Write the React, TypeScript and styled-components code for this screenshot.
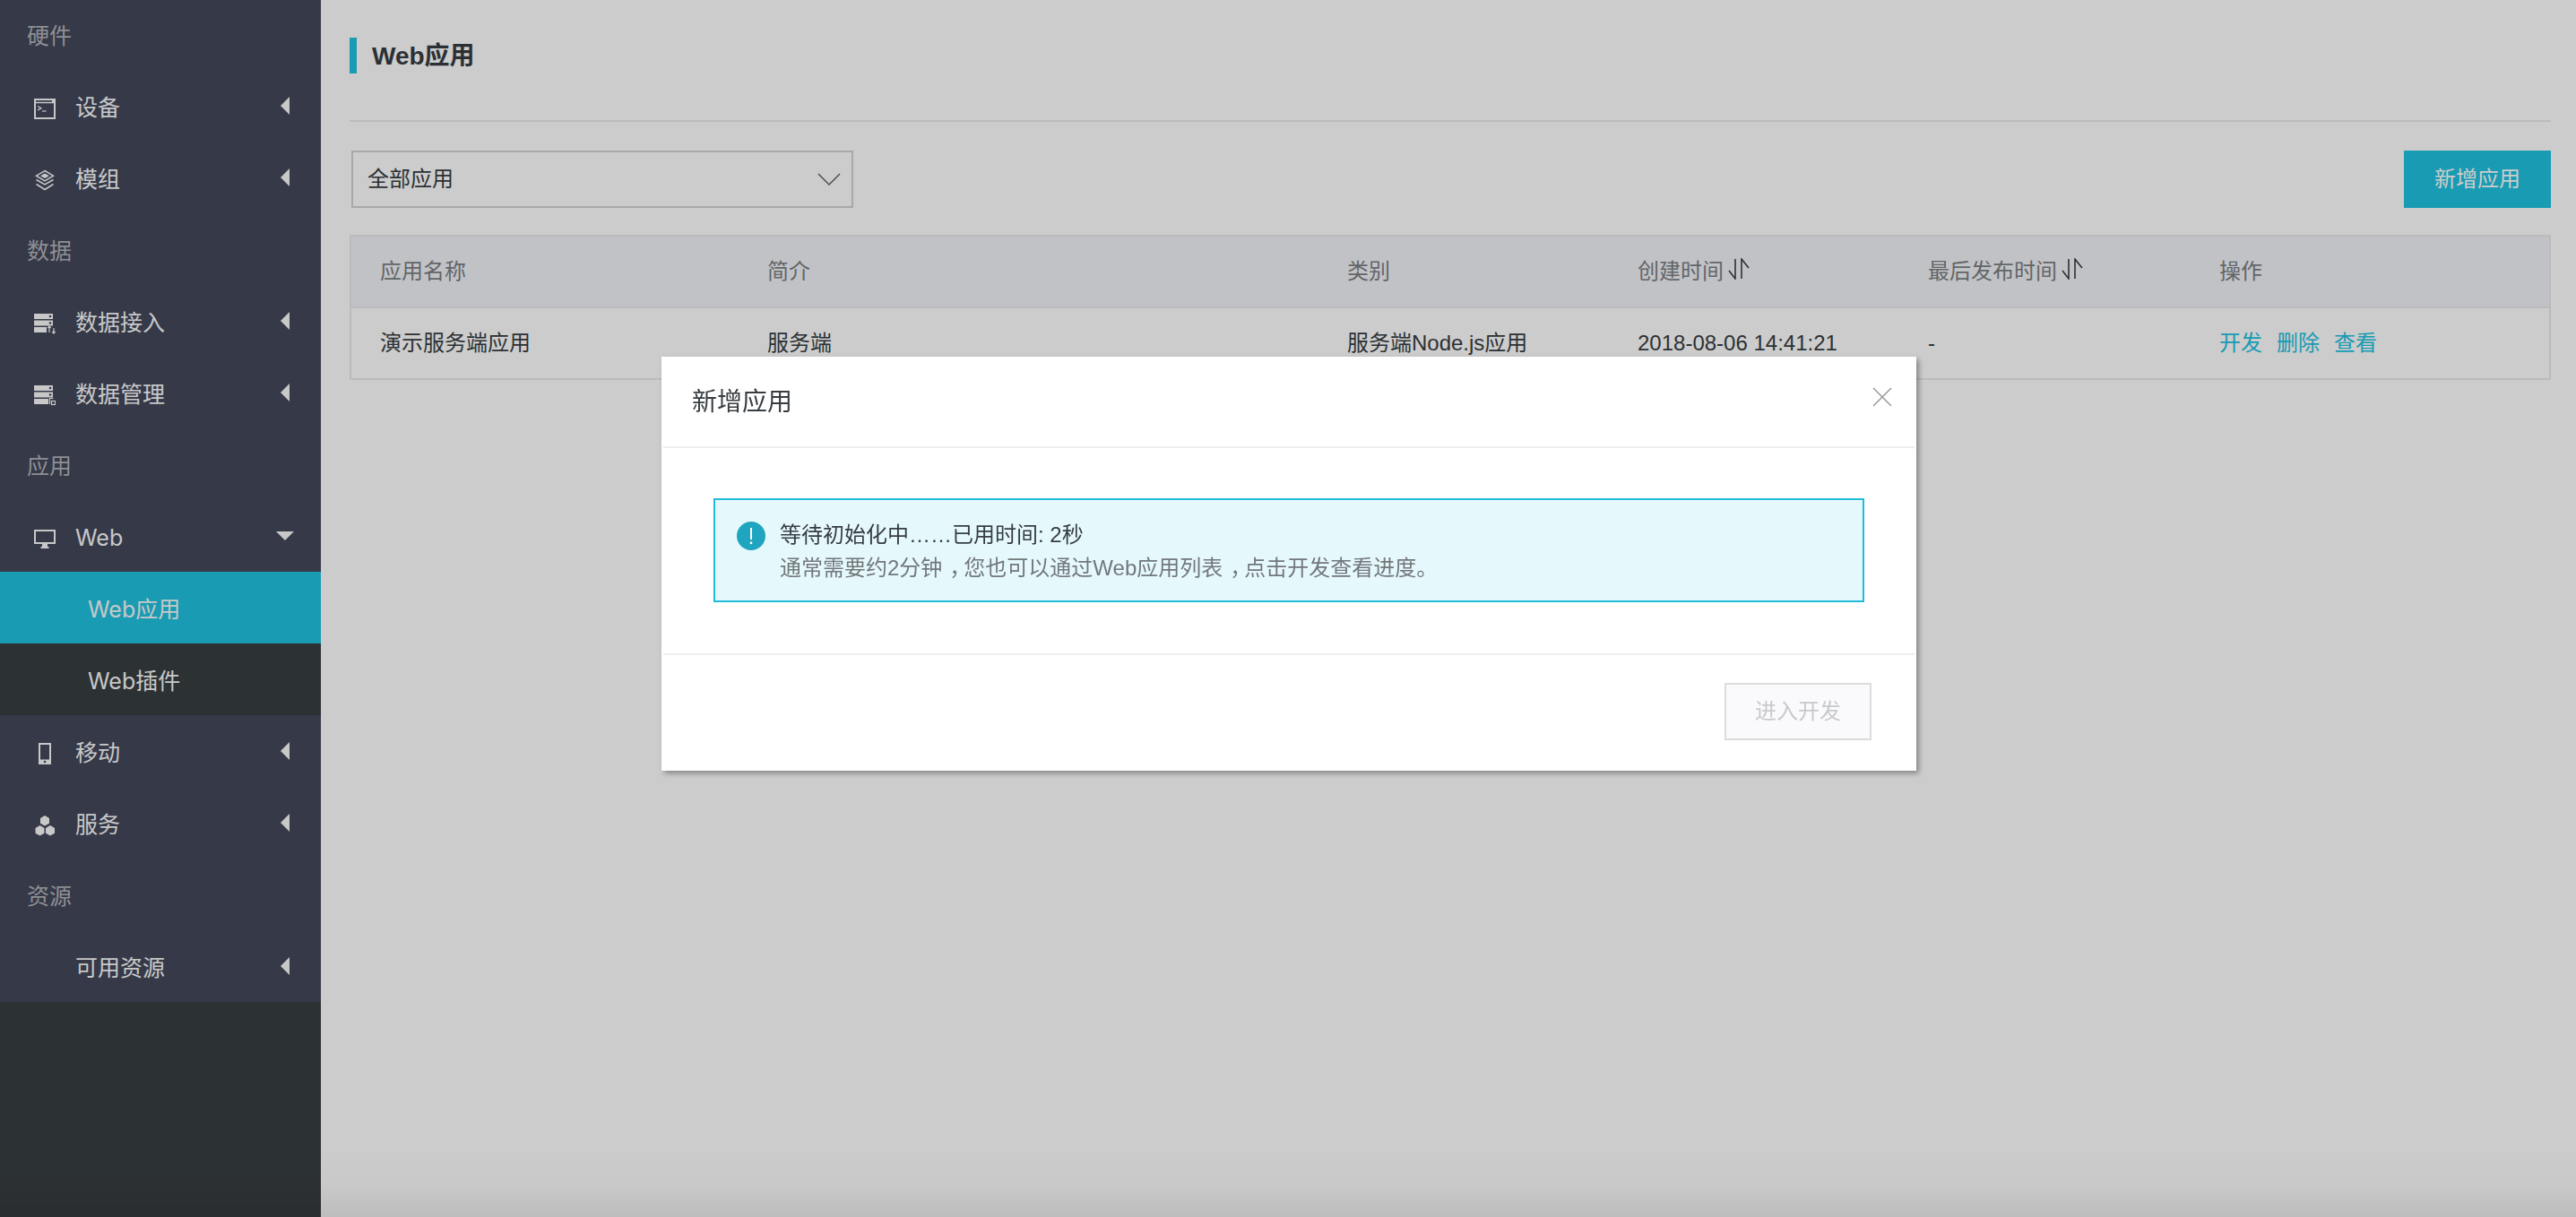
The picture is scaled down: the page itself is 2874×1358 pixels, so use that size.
import React from 'react'
import styled, { createGlobalStyle } from 'styled-components'

const Global = createGlobalStyle`
  html, body {
    margin: 0;
    padding: 0;
    height: 100%;
    background: #fff;
    overflow: hidden;
  }
  body {
    font-family: "Liberation Sans", "Noto Sans CJK SC", sans-serif;
    font-size: 24px;
    line-height: 36px;
    color: #373d41;
  }
`

const Page = styled.div`
  display: flex;
  width: 2874px;
  height: 1358px;
`

const Sidebar = styled.aside`
  flex: 0 0 358px;
  background: #383e41;
  font-family: "Inter", "Noto Sans CJK SC", sans-serif;
  font-size: 25px;
`

const Nav = styled.nav`
  margin-top: -2px;
  background: #43485a;
`

const SectionLabel = styled.div`
  height: 80px;
  line-height: 84px;
  padding-left: 30px;
  color: #b2b3b8;
`

const NavItem = styled.div`
  position: relative;
  display: flex;
  align-items: center;
  height: 80px;
  padding: 3px 0 0 38px;
  box-sizing: border-box;
  color: #fafafa;
`

const IconSlot = styled.span`
  flex: 0 0 24px;
  height: 24px;
  margin: 3px 22px 0 0;
  svg {
    display: block;
  }
`

const ArrowLeft = styled.span`
  position: absolute;
  left: 313px;
  top: 30px;
  border-top: 10px solid transparent;
  border-bottom: 10px solid transparent;
  border-right: 10px solid #fafafa;
`

const ArrowDown = styled.span`
  position: absolute;
  left: 308px;
  top: 35px;
  border-left: 10px solid transparent;
  border-right: 10px solid transparent;
  border-top: 10px solid #fafafa;
`

const SubItem = styled.div<{ $active?: boolean }>`
  height: 80px;
  line-height: 84px;
  padding-left: 98px;
  color: #fafafa;
  background: ${(p) => (p.$active ? '#20c2e0' : '#383e41')};
`

const Main = styled.main`
  flex: 1;
  min-width: 0;
  padding: 42px 28px 0 32px;
`

const TitleBar = styled.h1`
  margin: 0 0 52px;
  height: 40px;
  line-height: 42px;
  padding-left: 17px;
  border-left: 8px solid #20c2e0;
  font-size: 28px;
  font-weight: 700;
  color: #373d41;
`

const Divider = styled.div`
  height: 2px;
  background: #eaeaea;
`

const Toolbar = styled.div`
  display: flex;
  justify-content: space-between;
  margin-top: 32px;
`

const Select = styled.div`
  display: flex;
  align-items: center;
  justify-content: space-between;
  box-sizing: border-box;
  width: 560px;
  height: 64px;
  margin-left: 2px;
  padding: 0 12px 0 16px;
  border: 2px solid #d3d3d3;
`

const PrimaryButton = styled.button`
  width: 164px;
  height: 64px;
  border: 0;
  padding: 0;
  font: inherit;
  color: #fff;
  background: #20c2e0;
`

const Table = styled.div`
  margin-top: 30px;
  border: 2px solid #eaeaea;
`

const Row = styled.div<{ $head?: boolean }>`
  display: grid;
  grid-template-columns: 432px 647px 324px 324px 325px 400px;
  align-items: center;
  height: 78px;
  background: ${(p) => (p.$head ? '#f2f3f7' : 'transparent')};
  color: ${(p) => (p.$head ? '#7b7f84' : '#373d41')};
  border-bottom: ${(p) => (p.$head ? '2px solid #eaeaea' : '0')};
`

const Cell = styled.div`
  display: flex;
  align-items: center;
  padding-left: 32px;
  white-space: nowrap;
`

const Links = styled(Cell)`
  gap: 16px;
`

const Link = styled.a`
  color: #20c2e0;
`

const SortIcon = styled.svg`
  margin: -7px 0 0 5px;
`

const Backdrop = styled.div`
  position: fixed;
  inset: 0;
  display: flex;
  justify-content: center;
  padding: 398px 0 0 2px;
  background: linear-gradient(
    to bottom,
    rgba(0, 0, 0, 0.2) calc(100% - 78px),
    rgba(0, 0, 0, 0.213) calc(100% - 36px),
    rgba(0, 0, 0, 0.26) 100%
  );
`

const Modal = styled.div`
  width: 1400px;
  height: 462px;
  background: #fff;
  box-shadow: 3px 3px 6px rgba(0, 0, 0, 0.35);
`

const ModalHead = styled.div`
  display: flex;
  justify-content: space-between;
  height: 100px;
  margin: 0 2px;
  padding: 0 25px 0 32px;
  border-bottom: 2px solid #eee;
`

const ModalTitle = styled.div`
  font-size: 28px;
  line-height: 102px;
  color: #373d41;
`

const CloseIcon = styled.svg`
  margin-top: 34px;
`

const ModalBody = styled.div`
  height: 229px;
  padding: 56px 58px 0;
  box-sizing: border-box;
`

const Alert = styled.div`
  display: flex;
  box-sizing: border-box;
  height: 116px;
  padding: 24px;
  gap: 16px;
  border: 2px solid #20bcd8;
  background: #e5f9fd;
`

const AlertText = styled.div`
  margin-top: -4px;
  line-height: 37px;
`

const AlertNote = styled.div`
  color: #73777a;
`

// the comma sits centred in its full-width box in the reference
const Comma = styled.span`
  display: inline-block;
  text-indent: 8px;
  letter-spacing: -8px;
`

const ModalFoot = styled.div`
  display: flex;
  justify-content: flex-end;
  margin: 0 2px;
  padding: 31px 48px 0 0;
  border-top: 2px solid #eee;
`

const DisabledButton = styled.button`
  box-sizing: border-box;
  width: 164px;
  height: 64px;
  padding: 0;
  font: inherit;
  color: #c8c9cb;
  background: #fafafc;
  border: 2px solid #dcdcdc;
`

const stroke = { fill: 'none', stroke: '#fafafa', strokeWidth: 2 }

const TerminalIcon = () => (
  <svg width="24" height="24" viewBox="0 0 24 24">
    <path d="M1 2h22v21H1z" {...stroke} />
    <path d="M1 5.5h22" {...stroke} strokeWidth={1.5} />
    <path d="M4 9.5l4 2.2-4 2.2" {...stroke} strokeWidth={1.2} />
    <path d="M9 15h4.5" {...stroke} strokeWidth={1.2} />
    <rect x="20" y="3" width="2" height="2" fill="#fafafa" />
  </svg>
)

const LayersIcon = () => (
  <svg width="24" height="24" viewBox="0 0 24 24">
    <path d="M12 1.5l9.5 5.7-9.5 5.7-9.5-5.7z" {...stroke} strokeWidth={1.5} />
    <path d="M12 4.5l5 2.8-5 2.8-5-2.8z" fill="#fafafa" />
    <path d="M2.5 11.5l9.5 5.5 9.5-5.5M2.5 16.5l9.5 6 9.5-6" {...stroke} strokeWidth={1.5} />
  </svg>
)

const ServerBars = ({ cut }: { cut: number }) => (
  <>
    <path d="M0 1h21v6H0z" fill="#fafafa" />
    <path d="M0 8.5h21v6H0z" fill="#fafafa" />
    <path d={`M0 16h${cut}v6H0z`} fill="#fafafa" />
    <circle cx="18" cy="4" r="1.3" fill="#43485a" />
    <circle cx="18" cy="11.5" r="1.3" fill="#43485a" />
  </>
)

const ServerInIcon = () => (
  <svg width="24" height="24" viewBox="0 0 24 24">
    <ServerBars cut={14} />
    <path d="M17 22v-7M15.3 17l1.7-2 1.7 2M22 17v6M20.3 21l1.7 2 1.7-2" {...stroke} strokeWidth={1.2} />
  </svg>
)

const ServerManageIcon = () => (
  <svg width="24" height="24" viewBox="0 0 24 24">
    <ServerBars cut={16} />
    <path d="M17.5 22v-6.5h4" {...stroke} strokeWidth={1.2} />
    <rect x="19.5" y="18.5" width="4" height="4" {...stroke} strokeWidth={1.2} />
  </svg>
)

const MonitorIcon = () => (
  <svg width="24" height="24" viewBox="0 0 24 24">
    <path d="M1 3h22v14H1z" {...stroke} />
    <path d="M9 18h6v3h1.5v2h-9v-2H9z" fill="#fafafa" />
  </svg>
)

const PhoneIcon = () => (
  <svg width="24" height="24" viewBox="0 0 24 24">
    <path d="M6 1h12v22H6z" {...stroke} />
    <rect x="5" y="18.5" width="14" height="5.5" fill="#fafafa" />
    <circle cx="12" cy="21" r="1.3" fill="#43485a" />
  </svg>
)

const HexIcon = () => (
  <svg width="24" height="24" viewBox="0 0 24 24">
    <path d="M12 1l5 2.9v5.8l-5 2.9-5-2.9V3.9z" fill="#fafafa" />
    <path d="M6.5 12l5 2.9v5.8l-5 2.9-5-2.9v-5.8z" fill="#fafafa" />
    <path d="M18 12l5 2.9v5.8l-5 2.9-5-2.9v-5.8z" fill="#fafafa" />
  </svg>
)

const Sort = () => (
  <SortIcon width="24" height="24" viewBox="0 0 24 24" fill="none" stroke="#373d41" strokeWidth="1.6">
    <path d="M8 1v22L1 14M15 23V1l8 10" />
  </SortIcon>
)

const App = () => {
  return (
    <>
      <Global />
      <Page>
        <Sidebar>
          <Nav>
            <SectionLabel>硬件</SectionLabel>
            <NavItem><IconSlot><TerminalIcon /></IconSlot>设备<ArrowLeft /></NavItem>
            <NavItem><IconSlot><LayersIcon /></IconSlot>模组<ArrowLeft /></NavItem>
            <SectionLabel>数据</SectionLabel>
            <NavItem><IconSlot><ServerInIcon /></IconSlot>数据接入<ArrowLeft /></NavItem>
            <NavItem><IconSlot><ServerManageIcon /></IconSlot>数据管理<ArrowLeft /></NavItem>
            <SectionLabel>应用</SectionLabel>
            <NavItem><IconSlot><MonitorIcon /></IconSlot>Web<ArrowDown /></NavItem>
            <SubItem $active>Web应用</SubItem>
            <SubItem>Web插件</SubItem>
            <NavItem><IconSlot><PhoneIcon /></IconSlot>移动<ArrowLeft /></NavItem>
            <NavItem><IconSlot><HexIcon /></IconSlot>服务<ArrowLeft /></NavItem>
            <SectionLabel>资源</SectionLabel>
            <NavItem><IconSlot />可用资源<ArrowLeft /></NavItem>
          </Nav>
        </Sidebar>
        <Main>
          <TitleBar>Web应用</TitleBar>
          <Divider />
          <Toolbar>
            <Select>
              全部应用
              <svg width="26" height="16" viewBox="0 0 26 16" fill="none" stroke="#5f6367" strokeWidth="1.5">
                <path d="M1 2l12 12L25 2" />
              </svg>
            </Select>
            <PrimaryButton>新增应用</PrimaryButton>
          </Toolbar>
          <Table>
            <Row $head>
              <Cell>应用名称</Cell>
              <Cell>简介</Cell>
              <Cell>类别</Cell>
              <Cell>创建时间<Sort /></Cell>
              <Cell>最后发布时间<Sort /></Cell>
              <Cell>操作</Cell>
            </Row>
            <Row>
              <Cell>演示服务端应用</Cell>
              <Cell>服务端</Cell>
              <Cell>服务端Node.js应用</Cell>
              <Cell>2018-08-06 14:41:21</Cell>
              <Cell>-</Cell>
              <Links>
                <Link>开发</Link>
                <Link>删除</Link>
                <Link>查看</Link>
              </Links>
            </Row>
          </Table>
        </Main>
      </Page>
      <Backdrop>
        <Modal>
          <ModalHead>
            <ModalTitle>新增应用</ModalTitle>
            <CloseIcon width="22" height="22" viewBox="0 0 22 22" fill="none" stroke="#9a9a9a" strokeWidth="1.5">
              <path d="M1 1l20 20M21 1L1 21" />
            </CloseIcon>
          </ModalHead>
          <ModalBody>
            <Alert>
              <svg width="32" height="32" viewBox="0 0 32 32">
                <circle cx="16" cy="16" r="16" fill="#1fa5bf" />
                <rect x="15" y="7" width="2" height="13" fill="#fff" />
                <rect x="14.8" y="22.5" width="2.4" height="2.6" fill="#fff" />
              </svg>
              <AlertText>
                <div>等待初始化中……已用时间: 2秒</div>
                <AlertNote>
                  通常需要约2分钟<Comma>，</Comma>您也可以通过Web应用列表<Comma>，</Comma>点击开发查看进度。
                </AlertNote>
              </AlertText>
            </Alert>
          </ModalBody>
          <ModalFoot>
            <DisabledButton>进入开发</DisabledButton>
          </ModalFoot>
        </Modal>
      </Backdrop>
    </>
  )
}

export default App
